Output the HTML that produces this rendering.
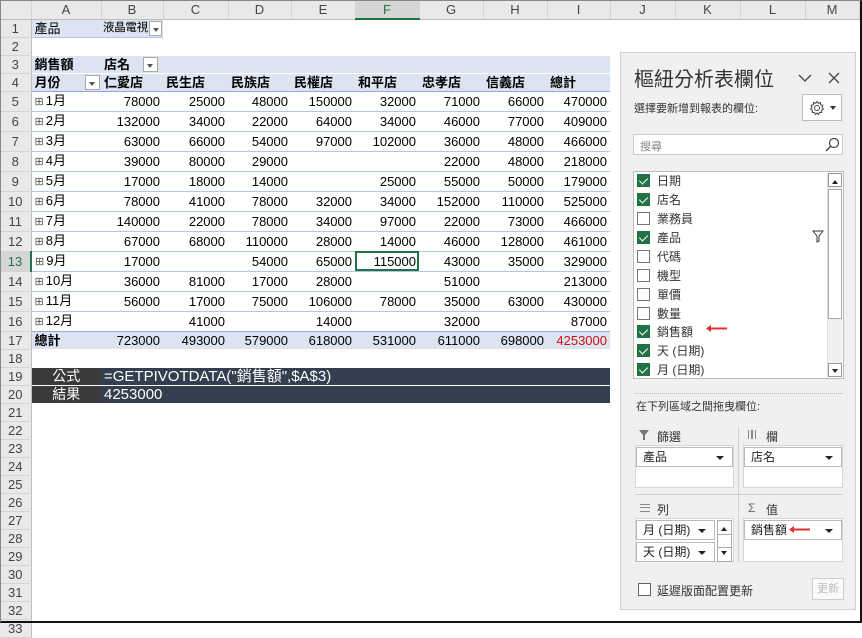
<!DOCTYPE html>
<html><head><meta charset="utf-8"><style>
*{box-sizing:border-box;margin:0;padding:0}
body{width:862px;height:623px;overflow:hidden;background:#fff;font-family:"Liberation Sans","Noto Sans CJK TC",sans-serif;font-size:13px;color:#000;position:relative}
#frame{position:absolute;left:0;top:0;width:862px;height:623px;border:2px solid #111;border-left:1px solid #888;border-top:1px solid #888;pointer-events:none;z-index:50}
table{border-collapse:collapse;table-layout:fixed;position:absolute;left:0;top:0;width:859px}
td{height:17px;padding:0 3px;white-space:nowrap;overflow:hidden;line-height:17px;border-bottom:1px solid transparent}
tr.h td{height:19px;background:#e9e9e9;text-align:center;color:#444;border-right:1px solid #d4d4d4;border-bottom:1px solid #bdbdbd;font-size:13px}
td.rh{background:#e9e9e9;text-align:center;color:#444;border-right:1px solid #bdbdbd;border-bottom:1px solid #d4d4d4;padding:0}
td.n{text-align:right}
.pv td.c{background:#dce3f1}
.d td.c{border-bottom:1px solid #b4c6e7}
.b{font-weight:bold}
.dk td.c{background:#333f4f;color:#fff;font-size:15px}
.dk td.a{background:#3a3a3a;color:#fff;text-align:center;font-size:14px}
.pl{font-size:11px;color:#555;margin-right:2px}
.dd{float:right;margin-top:1px;width:15px;height:15px;border:1px solid #aaa;background:#fff;position:relative}
.dd:after{content:"";position:absolute;left:3px;top:6px;border:3px solid transparent;border-top:4px solid #555}
#panel{position:absolute;left:620px;top:52px;width:236px;height:558px;background:#f0f0f0;border:1px solid #cfcfcf;z-index:10}
.ab{position:absolute}
.cb{position:absolute;left:16px;width:13px;height:13px;border:1px solid #777;background:#fff}
.cb.on{background:#217346;border-color:#217346}
.cb.on:after{content:"";position:absolute;left:3px;top:1px;width:4px;height:7px;border:solid #fff;border-width:0 1.5px 1.5px 0;transform:rotate(45deg)}
.it{position:absolute;left:36px;font-size:12px;color:#333}
.box{position:absolute;background:#fff;border:1px solid #d6d6d6}
.fld{position:absolute;background:#fff;border:1px solid #bbb;font-size:12px;padding-left:6px;line-height:18px;color:#222}
.fld:after{content:"";position:absolute;right:8px;top:8px;border:4px solid transparent;border-top:4px solid #222}
</style></head><body>
<table>
<colgroup><col style="width:31px"><col style="width:70px"><col style="width:62px"><col style="width:65px"><col style="width:63px"><col style="width:64px"><col style="width:64px"><col style="width:64px"><col style="width:64px"><col style="width:63px"><col style="width:65px"><col style="width:65px"><col style="width:65px"><col style="width:54px"></colgroup>
<tr class="h"><td style="background:#e9e9e9"></td><td>A</td><td>B</td><td>C</td><td>D</td><td>E</td><td style="background:#d6d6d6;border-bottom:2px solid #217346;color:#217346">F</td><td>G</td><td>H</td><td>I</td><td>J</td><td>K</td><td>L</td><td>M</td></tr>
<tr class="pv"><td class="rh">1</td><td class="c" style="border-bottom:1px solid #b4c6e7">產品</td><td class="c" style="border-bottom:1px solid #b4c6e7;padding:0 1px 0 2px;font-size:11.5px;letter-spacing:-0.3px"><span class="dd" style="width:13px"></span>液晶電視</td><td></td><td></td><td></td><td></td><td></td><td></td><td></td><td></td><td></td><td></td><td></td></tr>
<tr><td class="rh">2</td><td colspan="13"></td></tr>
<tr class="pv"><td class="rh">3</td><td class="c b">銷售額</td><td class="c b" style="padding-right:5px"><span class="dd"></span>店名</td><td class="c"></td><td class="c"></td><td class="c"></td><td class="c"></td><td class="c"></td><td class="c"></td><td class="c"></td><td></td><td></td><td></td><td></td></tr>
<tr class="pv"><td class="rh">4</td><td class="c b" style="border-bottom:1px solid #8ea9db;padding-right:1px"><span class="dd"></span>月份</td><td class="c b" style="border-bottom:1px solid #8ea9db">仁愛店</td><td class="c b" style="border-bottom:1px solid #8ea9db">民生店</td><td class="c b" style="border-bottom:1px solid #8ea9db">民族店</td><td class="c b" style="border-bottom:1px solid #8ea9db">民權店</td><td class="c b" style="border-bottom:1px solid #8ea9db">和平店</td><td class="c b" style="border-bottom:1px solid #8ea9db">忠孝店</td><td class="c b" style="border-bottom:1px solid #8ea9db">信義店</td><td class="c b" style="border-bottom:1px solid #8ea9db">總計</td><td></td><td></td><td></td><td></td></tr>
<tr class="d"><td class="rh">5</td><td class="c"><span class="pl">⊞</span>1月</td><td class="c n">78000</td><td class="c n">25000</td><td class="c n">48000</td><td class="c n">150000</td><td class="c n">32000</td><td class="c n">71000</td><td class="c n">66000</td><td class="c n">470000</td><td></td><td></td><td></td><td></td></tr>
<tr class="d"><td class="rh">6</td><td class="c"><span class="pl">⊞</span>2月</td><td class="c n">132000</td><td class="c n">34000</td><td class="c n">22000</td><td class="c n">64000</td><td class="c n">34000</td><td class="c n">46000</td><td class="c n">77000</td><td class="c n">409000</td><td></td><td></td><td></td><td></td></tr>
<tr class="d"><td class="rh">7</td><td class="c"><span class="pl">⊞</span>3月</td><td class="c n">63000</td><td class="c n">66000</td><td class="c n">54000</td><td class="c n">97000</td><td class="c n">102000</td><td class="c n">36000</td><td class="c n">48000</td><td class="c n">466000</td><td></td><td></td><td></td><td></td></tr>
<tr class="d"><td class="rh">8</td><td class="c"><span class="pl">⊞</span>4月</td><td class="c n">39000</td><td class="c n">80000</td><td class="c n">29000</td><td class="c n"></td><td class="c n"></td><td class="c n">22000</td><td class="c n">48000</td><td class="c n">218000</td><td></td><td></td><td></td><td></td></tr>
<tr class="d"><td class="rh">9</td><td class="c"><span class="pl">⊞</span>5月</td><td class="c n">17000</td><td class="c n">18000</td><td class="c n">14000</td><td class="c n"></td><td class="c n">25000</td><td class="c n">55000</td><td class="c n">50000</td><td class="c n">179000</td><td></td><td></td><td></td><td></td></tr>
<tr class="d"><td class="rh">10</td><td class="c"><span class="pl">⊞</span>6月</td><td class="c n">78000</td><td class="c n">41000</td><td class="c n">78000</td><td class="c n">32000</td><td class="c n">34000</td><td class="c n">152000</td><td class="c n">110000</td><td class="c n">525000</td><td></td><td></td><td></td><td></td></tr>
<tr class="d"><td class="rh">11</td><td class="c"><span class="pl">⊞</span>7月</td><td class="c n">140000</td><td class="c n">22000</td><td class="c n">78000</td><td class="c n">34000</td><td class="c n">97000</td><td class="c n">22000</td><td class="c n">73000</td><td class="c n">466000</td><td></td><td></td><td></td><td></td></tr>
<tr class="d"><td class="rh">12</td><td class="c"><span class="pl">⊞</span>8月</td><td class="c n">67000</td><td class="c n">68000</td><td class="c n">110000</td><td class="c n">28000</td><td class="c n">14000</td><td class="c n">46000</td><td class="c n">128000</td><td class="c n">461000</td><td></td><td></td><td></td><td></td></tr>
<tr class="d"><td class="rh" style="background:#d6d6d6;color:#217346;border-right:2px solid #217346">13</td><td class="c"><span class="pl">⊞</span>9月</td><td class="c n">17000</td><td class="c n"></td><td class="c n">54000</td><td class="c n">65000</td><td class="c n" style="outline:2px solid #217346;outline-offset:-2px">115000</td><td class="c n">43000</td><td class="c n">35000</td><td class="c n">329000</td><td></td><td></td><td></td><td></td></tr>
<tr class="d"><td class="rh">14</td><td class="c"><span class="pl">⊞</span>10月</td><td class="c n">36000</td><td class="c n">81000</td><td class="c n">17000</td><td class="c n">28000</td><td class="c n"></td><td class="c n">51000</td><td class="c n"></td><td class="c n">213000</td><td></td><td></td><td></td><td></td></tr>
<tr class="d"><td class="rh">15</td><td class="c"><span class="pl">⊞</span>11月</td><td class="c n">56000</td><td class="c n">17000</td><td class="c n">75000</td><td class="c n">106000</td><td class="c n">78000</td><td class="c n">35000</td><td class="c n">63000</td><td class="c n">430000</td><td></td><td></td><td></td><td></td></tr>
<tr class="d"><td class="rh">16</td><td class="c" style="border-bottom-color:#8ea9db"><span class="pl">⊞</span>12月</td><td class="c n" style="border-bottom-color:#8ea9db"></td><td class="c n" style="border-bottom-color:#8ea9db">41000</td><td class="c n" style="border-bottom-color:#8ea9db"></td><td class="c n" style="border-bottom-color:#8ea9db">14000</td><td class="c n" style="border-bottom-color:#8ea9db"></td><td class="c n" style="border-bottom-color:#8ea9db">32000</td><td class="c n" style="border-bottom-color:#8ea9db"></td><td class="c n" style="border-bottom-color:#8ea9db">87000</td><td></td><td></td><td></td><td></td></tr>
<tr class="pv"><td class="rh">17</td><td class="c b">總計</td><td class="c n">723000</td><td class="c n">493000</td><td class="c n">579000</td><td class="c n">618000</td><td class="c n">531000</td><td class="c n">611000</td><td class="c n">698000</td><td class="c n" style="color:#d01010">4253000</td><td></td><td></td><td></td><td></td></tr>
<tr><td class="rh">18</td><td colspan="13"></td></tr>
<tr class="dk"><td class="rh">19</td><td class="a" style="border-bottom-color:#fff">公式</td><td class="c" colspan="8" style="border-bottom-color:#fff">=GETPIVOTDATA("銷售額",$A$3)</td><td></td><td></td><td></td><td></td></tr>
<tr class="dk"><td class="rh">20</td><td class="a">結果</td><td class="c" colspan="8">4253000</td><td></td><td></td><td></td><td></td></tr>
<tr><td class="rh">21</td><td colspan="13"></td></tr>
<tr><td class="rh">22</td><td colspan="13"></td></tr>
<tr><td class="rh">23</td><td colspan="13"></td></tr>
<tr><td class="rh">24</td><td colspan="13"></td></tr>
<tr><td class="rh">25</td><td colspan="13"></td></tr>
<tr><td class="rh">26</td><td colspan="13"></td></tr>
<tr><td class="rh">27</td><td colspan="13"></td></tr>
<tr><td class="rh">28</td><td colspan="13"></td></tr>
<tr><td class="rh">29</td><td colspan="13"></td></tr>
<tr><td class="rh">30</td><td colspan="13"></td></tr>
<tr><td class="rh">31</td><td colspan="13"></td></tr>
<tr><td class="rh">32</td><td colspan="13"></td></tr>
<tr><td class="rh">33</td><td colspan="13"></td></tr>
</table>

<div id="panel">
<div class="ab" style="left:13px;top:10px;font-size:20px;color:#333">樞紐分析表欄位</div>
<svg class="ab" style="left:177px;top:20px" width="14" height="10"><path d="M1 2 L7 8 L13 2" fill="none" stroke="#444" stroke-width="1.3"/></svg>
<svg class="ab" style="left:207px;top:19px" width="12" height="12"><path d="M1 1 L11 11 M11 1 L1 11" fill="none" stroke="#444" stroke-width="1.3"/></svg>
<div class="ab" style="left:13px;top:47px;font-size:11px;color:#333">選擇要新增到報表的欄位:</div>
<div class="box" style="left:181px;top:41px;width:40px;height:27px;border-color:#bbb"><svg style="position:absolute;left:6px;top:5px" width="16" height="16" viewBox="0 0 16 16"><circle cx="8" cy="8" r="2.5" fill="none" stroke="#444"/><path d="M8 1.5 L9.3 3.3 L11.5 2.6 L11.7 4.8 L13.9 5.3 L13 7.3 L14.5 9 L12.6 10.1 L12.9 12.4 L10.6 12.4 L9.6 14.4 L8 13 L6.4 14.4 L5.4 12.4 L3.1 12.4 L3.4 10.1 L1.5 9 L3 7.3 L2.1 5.3 L4.3 4.8 L4.5 2.6 L6.7 3.3 Z" fill="none" stroke="#444" stroke-width="1"/></svg><div style="position:absolute;left:27px;top:11px;border:3.5px solid transparent;border-top:4px solid #333"></div></div>
<div class="box" style="left:12px;top:81px;width:210px;height:21px;border-color:#ccc"><span style="position:absolute;left:6px;top:3px;font-size:11px;color:#888">搜尋</span><svg style="position:absolute;right:2px;top:2px" width="16" height="16"><circle cx="10" cy="6" r="4.5" fill="none" stroke="#444" stroke-width="1.2"/><path d="M7 9 L2 14" stroke="#444" stroke-width="1.4"/></svg></div>
<div class="box" style="left:12px;top:118px;width:211px;height:208px;border-color:#bbb">
<div class="ab" style="right:1px;top:1px;width:15px;height:204px;background:#f0f0f0;border-left:1px solid #ddd"><div style="position:absolute;left:0;top:0;width:14px;height:14px;border:1px solid #999;background:#fff"><div style="position:absolute;left:3px;top:3px;border:3.5px solid transparent;border-bottom:4px solid #222"></div></div><div style="position:absolute;left:0;top:16px;width:14px;height:130px;border:1px solid #aaa;background:#fff"></div><div style="position:absolute;left:0;bottom:0;width:14px;height:14px;border:1px solid #999;background:#fff"><div style="position:absolute;left:3px;top:5px;border:3.5px solid transparent;border-top:4px solid #222"></div></div></div>
</div>
<div class="cb on" style="top:121px"></div><div class="it" style="top:119px">日期</div>
<div class="cb on" style="top:140px"></div><div class="it" style="top:138px">店名</div>
<div class="cb" style="top:159px"></div><div class="it" style="top:157px">業務員</div>
<div class="cb on" style="top:178px"></div><div class="it" style="top:176px">產品</div>
<svg class="ab" style="left:191px;top:177px" width="12" height="13"><path d="M1 1 H11 L7 6 V11 L5 12 V6 Z" fill="none" stroke="#333" stroke-width="1"/></svg>
<div class="cb" style="top:197px"></div><div class="it" style="top:195px">代碼</div>
<div class="cb" style="top:216px"></div><div class="it" style="top:214px">機型</div>
<div class="cb" style="top:235px"></div><div class="it" style="top:233px">單價</div>
<div class="cb" style="top:254px"></div><div class="it" style="top:252px">數量</div>
<div class="cb on" style="top:272px"></div><div class="it" style="top:270px">銷售額</div>
<svg class="ab" style="left:84px;top:271px" width="24" height="9"><path d="M22 4.5 H4" stroke="#e03030" stroke-width="2"/><path d="M1 4.5 L6 1 L6 8 Z" fill="#e03030"/></svg>
<div class="cb on" style="top:291px"></div><div class="it" style="top:289px">天 (日期)</div>
<div class="cb on" style="top:310px"></div><div class="it" style="top:308px">月 (日期)</div>
<div class="ab" style="left:14px;top:340px;width:208px;border-top:1px dotted #bbb"></div>
<div class="ab" style="left:15px;top:345px;font-size:11px;color:#333">在下列區域之間拖曳欄位:</div>
<div class="ab" style="left:117px;top:374px;width:1px;height:135px;background:#d0d0d0"></div>
<div class="ab" style="left:14px;top:441px;width:208px;height:1px;background:#d0d0d0"></div>
<svg class="ab" style="left:18px;top:377px" width="10" height="10"><path d="M0 0 H10 L6 5 V10 H4 V5 Z" fill="#777"/></svg>
<div class="ab" style="left:36px;top:375px;font-size:12px;color:#333">篩選</div>
<div class="ab" style="left:127px;top:377px;width:8px;height:9px;border-left:1px solid #888;border-right:1px solid #888"><div style="margin-left:2px;width:2px;height:9px;border-left:1px solid #888;border-right:1px solid #888"></div></div>
<div class="ab" style="left:145px;top:375px;font-size:12px;color:#333">欄</div>
<div class="box" style="left:14px;top:392px;width:99px;height:43px"></div>
<div class="fld" style="left:15px;top:394px;width:97px;height:20px">產品</div>
<div class="box" style="left:122px;top:392px;width:100px;height:43px"></div>
<div class="fld" style="left:123px;top:394px;width:98px;height:20px">店名</div>
<div class="ab" style="left:19px;top:451px;width:10px;height:8px;border-top:1px solid #888;border-bottom:1px solid #888"><div style="margin-top:2px;height:2px;border-top:1px solid #888"></div></div>
<div class="ab" style="left:36px;top:448px;font-size:12px;color:#333">列</div>
<div class="ab" style="left:127px;top:448px;font-size:12px;color:#666">Σ</div>
<div class="ab" style="left:145px;top:448px;font-size:12px;color:#333">值</div>
<div class="box" style="left:14px;top:465px;width:99px;height:44px"></div>
<div class="fld" style="left:15px;top:467px;width:79px;height:20px">月 (日期)</div>
<div class="fld" style="left:15px;top:489px;width:79px;height:20px">天 (日期)</div>
<div class="ab" style="left:96px;top:467px;width:15px;height:42px;background:#fff;border:1px solid #aaa"><div style="position:absolute;left:3px;top:3px;border:3.5px solid transparent;border-bottom:4px solid #222"></div><div style="position:absolute;left:-1px;top:13px;width:15px;height:14px;border:1px solid #aaa"></div><div style="position:absolute;left:3px;bottom:3px;border:3.5px solid transparent;border-top:4px solid #222"></div></div>
<div class="box" style="left:122px;top:465px;width:100px;height:44px"></div>
<div class="fld" style="left:123px;top:467px;width:98px;height:20px">銷售額</div>
<svg class="ab" style="left:167px;top:472px" width="24" height="9"><path d="M22 4.5 H4" stroke="#e03030" stroke-width="2"/><path d="M1 4.5 L6 1 L6 8 Z" fill="#e03030"/></svg>
<div class="ab" style="left:17px;top:530px;width:13px;height:13px;border:1px solid #666;background:#fff"></div>
<div class="ab" style="left:36px;top:529px;font-size:12px;color:#333">延遲版面配置更新</div>
<div class="ab" style="left:191px;top:525px;width:32px;height:22px;border:1px solid #ccc;background:#fafafa;font-size:11px;color:#bbb;text-align:center;line-height:20px">更新</div>
</div>
<div id="frame"></div>
</body></html>
